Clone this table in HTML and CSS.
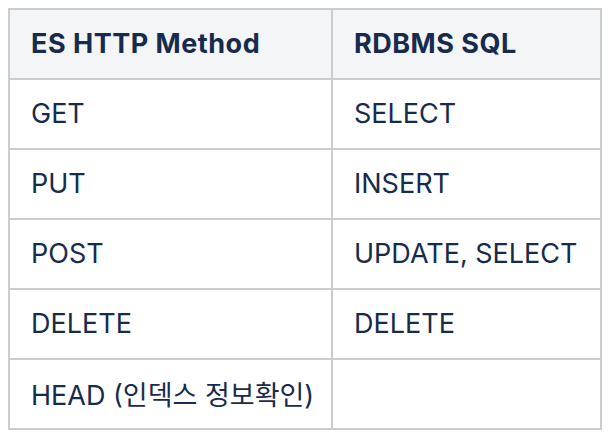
FILE: index.html
```html
<!DOCTYPE html>
<html>
<head>
<meta charset="utf-8">
<link rel="stylesheet" href="styles.css">
</head>
<body>
<table class="grid">
  <thead>
    <tr><th class="c1">ES HTTP Method</th><th>RDBMS SQL</th></tr>
  </thead>
  <tbody>
    <tr><td>GET</td><td>SELECT</td></tr>
    <tr><td>PUT</td><td>INSERT</td></tr>
    <tr><td>POST</td><td>UPDATE, SELECT</td></tr>
    <tr><td>DELETE</td><td>DELETE</td></tr>
    <tr><td>HEAD (인덱스 정보확인)</td><td></td></tr>
  </tbody>
</table>
</body>
</html>
```
FILE: styles.css
```css
body {
  margin: 8px;
  background: #ffffff;
  font-family: Inter, "Noto Sans CJK KR", sans-serif;
  color: #172b4d;
}
.grid {
  border-collapse: collapse;
  width: 594px;
  table-layout: fixed;
}
.grid th, .grid td {
  border: 2px solid #c9ccd1;
  height: 66px;
  padding: 0 0 2px 21px;
  text-align: left;
  font-size: 27px;
  vertical-align: middle;
}
.grid th {
  background: #f3f5f7;
  font-weight: 700;
  letter-spacing: 0.5px;
}
.grid td {
  font-weight: 400;
}
.c1 {
  width: 300px;
}
```
